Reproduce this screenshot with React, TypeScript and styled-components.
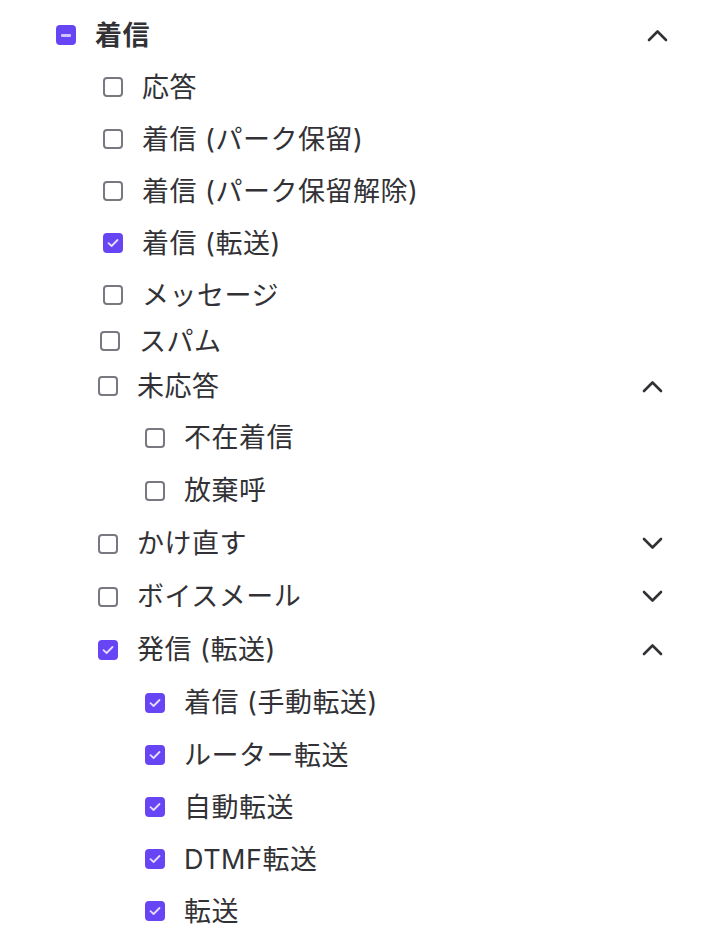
import { FC } from 'react';
import styled, { createGlobalStyle } from 'styled-components';

const purple = '#6845f4';
const ink = '#323236';
const boxGrey = '#7a7781';

const GlobalStyle = createGlobalStyle`
  html, body {
    margin: 0;
    padding: 0;
    background: #ffffff;
  }
  body {
    font-family: Inter, "Noto Sans CJK JP", sans-serif;
    color: ${ink};
  }
`;

const Wrapper = styled.div`
  width: 716px;
  box-sizing: border-box;
  padding: 9px 48px 0 56px;
  display: flex;
  flex-direction: column;
`;

type RowProps = {
  $h: number;
  $indent: number;
};

const Row = styled.div<RowProps>`
  height: ${({ $h }) => $h}px;
  padding-left: ${({ $indent }) => $indent}px;
  display: flex;
  align-items: center;
`;

type GroupProps = {
  $shift: number;
};

// the lower part of the list sits a few px further left in the source
const Group = styled.div<GroupProps>`
  display: flex;
  flex-direction: column;
  margin-left: ${({ $shift }) => -$shift}px;
  margin-right: ${({ $shift }) => $shift}px;
`;

type BoxProps = {
  $on: boolean;
};

const Box = styled.span<BoxProps>`
  flex: none;
  width: 20px;
  height: 20px;
  box-sizing: border-box;
  border-radius: 4px;
  border: 2px solid ${({ $on }) => ($on ? purple : boxGrey)};
  background: ${({ $on }) => ($on ? purple : '#ffffff')};
  display: flex;
  align-items: center;
  justify-content: center;
  margin-right: 19px;
`;

const Dash = styled.span`
  width: 10px;
  height: 3px;
  border-radius: 1px;
  background: #cfc4ff;
`;

type LabelProps = {
  $bold?: boolean;
};

const Label = styled.span<LabelProps>`
  flex: 1;
  font-size: 27px;
  line-height: 1;
  letter-spacing: 0.5px;
  font-weight: ${({ $bold }) => ($bold ? 700 : 400)};
  white-space: nowrap;
`;

const Chevron = styled.svg`
  flex: none;
  width: 21px;
  height: 13px;
`;

type State = 'on' | 'off' | 'some';

const Check: FC<{ state: State }> = ({ state }) => (
  <Box $on={state !== 'off'}>
    {state === 'some' && <Dash />}
    {state === 'on' && (
      <svg width="12" height="10" viewBox="0 0 12 10">
        <polyline
          points="1.5,5.2 4.6,8 10.5,2"
          fill="none"
          stroke="#e4ddff"
          strokeWidth="1.8"
          strokeLinecap="round"
          strokeLinejoin="round"
        />
      </svg>
    )}
  </Box>
);

const Arrow: FC<{ up: boolean }> = ({ up }) => (
  <Chevron viewBox="0 0 21 13">
    <polyline
      points={up ? '2,11 10.5,2.5 19,11' : '2,2 10.5,10.5 19,2'}
      fill="none"
      stroke={ink}
      strokeWidth="2.6"
      strokeLinecap="round"
      strokeLinejoin="round"
    />
  </Chevron>
);

type ItemProps = {
  label: string;
  state?: State;
  h?: number;
  level?: number;
  bold?: boolean;
  arrow?: 'up' | 'down';
};

const Item: FC<ItemProps> = ({
  label,
  state = 'off',
  h = 52,
  level = 1,
  bold,
  arrow,
}) => (
  <Row $h={h} $indent={level * 47 - 47}>
    <Check state={state} />
    <Label $bold={bold}>{label}</Label>
    {arrow && <Arrow up={arrow === 'up'} />}
  </Row>
);

const App: FC = () => (
  <>
    <GlobalStyle />
    <Wrapper>
      <Item label="着信" state="some" bold arrow="up" level={1} />
      <Group $shift={0}>
        <Item label="応答" level={2} />
        <Item label="着信 (パーク保留)" level={2} />
        <Item label="着信 (パーク保留解除)" level={2} />
        <Item label="着信 (転送)" state="on" level={2} />
        <Item label="メッセージ" level={2} />
      </Group>
      <Group $shift={3}>
        <Item label="スパム" h={40} level={2} />
      </Group>
      <Group $shift={5}>
        <Item label="未応答" h={50} level={2} arrow="up" />
        <Item label="不在着信" h={53} level={3} />
        <Item label="放棄呼" h={53} level={3} />
        <Item label="かけ直す" h={53} level={2} arrow="down" />
        <Item label="ボイスメール" h={53} level={2} arrow="down" />
        <Item label="発信 (転送)" state="on" h={53} level={2} arrow="up" />
        <Item label="着信 (手動転送)" state="on" h={53} level={3} />
        <Item label="ルーター転送" state="on" h={52} level={3} />
        <Item label="自動転送" state="on" h={52} level={3} />
        <Item label="DTMF転送" state="on" h={52} level={3} />
        <Item label="転送" state="on" h={52} level={3} />
      </Group>
    </Wrapper>
  </>
);

export default App;
